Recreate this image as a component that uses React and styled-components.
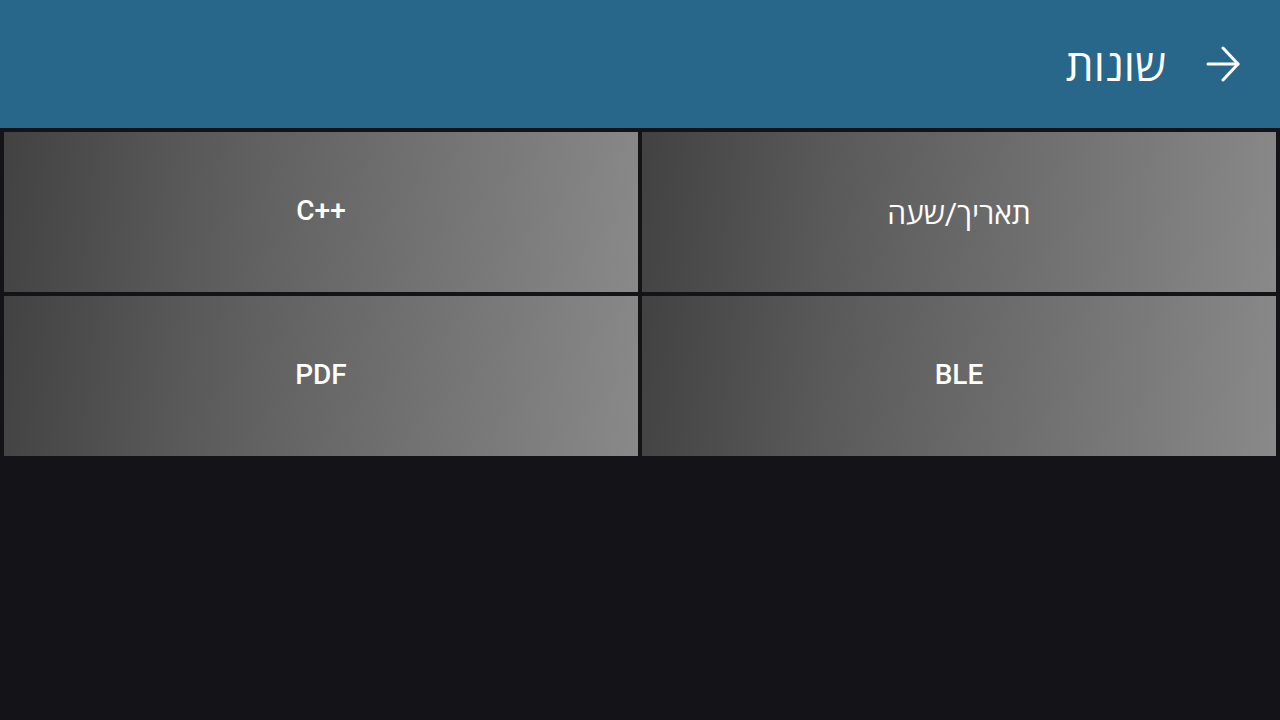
import styled, { createGlobalStyle } from 'styled-components'

const Global = createGlobalStyle`
  html, body {
    margin: 0;
    padding: 0;
    background: #141318;
  }
  body {
    font-family: Roboto, "Open Sans", sans-serif;
    color: #fff;
  }
`

const Page = styled.div`
  width: 1280px;
  height: 720px;
  background: #141318;
  display: flex;
  flex-direction: column;
`

const Header = styled.header`
  height: 128px;
  background: #28668a;
  display: flex;
  direction: rtl;
  align-items: center;
  padding-right: 40px;
  gap: 40px;
  box-sizing: border-box;
`

const Back = styled.button`
  background: none;
  border: 0;
  padding: 0;
  width: 34px;
  height: 36px;
  display: flex;
  align-items: center;
  justify-content: center;
  cursor: pointer;
`

const Title = styled.h1`
  margin: 0;
  font-family: "Open Sans", sans-serif;
  font-weight: 400;
  font-size: 44px;
  color: #fff;
  line-height: 1;
`

const Grid = styled.div`
  display: grid;
  direction: rtl;
  grid-template-columns: 1fr 1fr;
  grid-auto-rows: 160px;
  gap: 4px;
  padding: 4px;
`

const Tile = styled.button`
  border: 0;
  margin: 0;
  padding: 0 0 ${p => p.$hebrew ? '0' : '3px'};
  background: linear-gradient(96deg, #424242 0%, #5a5a5a 30%, #898989 100%);
  color: #fff;
  font-family: Roboto, "Open Sans", sans-serif;
  font-size: ${p => p.$hebrew ? '30px' : '28px'};
  font-weight: ${p => p.$hebrew ? 400 : 500};
  display: flex;
  align-items: center;
  justify-content: center;
  cursor: pointer;
`

const items = [
  { label: 'תאריך/שעה', hebrew: true },
  { label: 'C++' },
  { label: 'BLE' },
  { label: 'PDF' },
]

function Arrow() {
  return (
    <svg width="34" height="36" viewBox="0 0 34 36" fill="none" stroke="#fff" strokeWidth="3" strokeLinecap="round" strokeLinejoin="round">
      <path d="M2 18 H32" />
      <path d="M17 2 L32 18 L17 34" />
    </svg>
  )
}

export default function App() {
  return (
    <Page>
      <Global />
      <Header>
        <Back><Arrow /></Back>
        <Title>שונות</Title>
      </Header>
      <Grid>
        {items.map(item => (
          <Tile key={item.label} $hebrew={item.hebrew}>
            <span dir="ltr">{item.label}</span>
          </Tile>
        ))}
      </Grid>
    </Page>
  )
}
